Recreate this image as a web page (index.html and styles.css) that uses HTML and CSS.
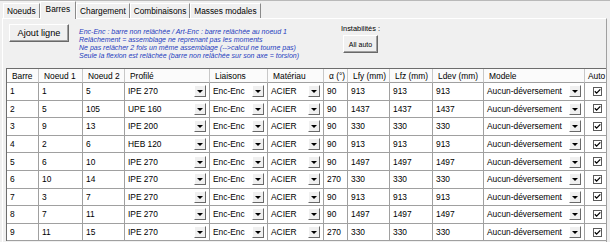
FILE: index.html
```html
<!DOCTYPE html>
<html lang="fr">
<head>
    <meta charset="UTF-8">
    <title>Barres</title>
    <link rel="stylesheet" href="styles.css">
</head>
<body>
    <div class="window">
        <div class="tabs">
            <span class="tab">Noeuds</span>
            <span class="tab active">Barres</span>
            <span class="tab">Chargement</span>
            <span class="tab">Combinaisons</span>
            <span class="tab">Masses modales</span>
        </div>

        <div class="page">
            <div class="toolbar">
                <button class="btn btn-add">Ajout ligne</button>
                <div class="notes">
                    <p>Enc-Enc : barre non relâchée / Art-Enc : barre relâchée au noeud 1</p>
                    <p>Relâchement = assemblage ne reprenant pas les moments</p>
                    <p>Ne pas relâcher 2 fois un même assemblage (--&gt;calcul ne tourne pas)</p>
                    <p>Seule la flexion est relâchée (barre non relâchée sur son axe = torsion)</p>
                </div>
                <div class="instab">
                    <span>Instabilités :</span>
                    <button class="btn btn-small">All auto</button>
                </div>
            </div>

            <div class="grid-wrap">
                <div class="grid" id="grid">
                    <div class="hd">Barre</div>
                    <div class="hd">Noeud 1</div>
                    <div class="hd">Noeud 2</div>
                    <div class="hd">Profilé</div>
                    <div class="hd">Liaisons</div>
                    <div class="hd">Matériau</div>
                    <div class="hd">α (°)</div>
                    <div class="hd">Lfy (mm)</div>
                    <div class="hd">Lfz (mm)</div>
                    <div class="hd">Ldev (mm)</div>
                    <div class="hd">Modele</div>
                    <div class="hd hd-last">Auto</div>
                </div>
            </div>
        </div>
    </div>

    <script>
        // lignes du tableau des barres
        const barres = [
            [1, 1, 5, "IPE 270", 90, 913],
            [2, 5, 105, "UPE 160", 90, 1437],
            [3, 9, 13, "IPE 200", 90, 330],
            [4, 2, 6, "HEB 120", 90, 913],
            [5, 6, 10, "IPE 270", 90, 1497],
            [6, 10, 14, "IPE 270", 270, 330],
            [7, 3, 7, "IPE 270", 90, 913],
            [8, 7, 11, "IPE 270", 90, 1497],
            [9, 11, 15, "IPE 270", 270, 330]
        ];

        const combo = (txt) => `<div class="cell combo"><span>${txt}</span><span class="drop"></span></div>`;
        const cell = (txt) => `<div class="cell">${txt}</div>`;
        const check = `<div class="cell center"><span class="check"><svg width="7" height="7" viewBox="0 0 7 7"><path d="M0.8 3.3 L2.6 5.1 L6.3 1.4" fill="none" stroke="#000" stroke-width="1.3"/></svg></span></div>`;

        let html = "";
        barres.forEach(b => {
            html += cell(b[0]) + cell(b[1]) + cell(b[2]);
            html += combo(b[3]) + combo("Enc-Enc") + combo("ACIER");
            html += cell(b[4]) + cell(b[5]) + cell(b[5]) + cell(b[5]);
            html += combo("Aucun-déversement") + check;
        });
        document.getElementById("grid").insertAdjacentHTML("beforeend", html);
    </script>
</body>
</html>
```

FILE: styles.css
```css
/* Styles généraux */
* {
    margin: 0;
    padding: 0;
    box-sizing: border-box;
}

body {
    background-color: #f0f0f0;
    font-family: "Liberation Sans", Arial, sans-serif;
    color: #000;
    width: 610px;
    height: 242px;
    overflow: hidden;
}

.window {
    border-top: 1px solid #b9b9b9;
}

/* Onglets */
.tabs {
    display: flex;
    align-items: flex-end;
    height: 17px;
    padding-left: 3px;
}

.tab {
    height: 15px;
    padding: 0 3px;
    font-size: 8.3px;
    line-height: 14px;
    border-top: 1px solid #fff;
    border-left: 1px solid #fff;
    border-right: 1px solid #8a8a8a;
    color: #000;
}

.tab.active {
    position: relative;
    z-index: 1;
    height: 18px;
    margin-bottom: -1px;
    padding: 0 5px;
    line-height: 15px;
    background-color: #f0f0f0;
}

/* Page de l'onglet */
.page {
    margin-left: 2px;
    width: 605px;
    height: 224px;
    border-top: 1px solid #fff;
    border-left: 1px solid #fff;
    border-right: 1px solid #a0a0a0;
    overflow: hidden;
}

.toolbar {
    display: flex;
    align-items: flex-start;
    height: 49px;
}

/* Boutons */
.btn {
    font-family: "Liberation Sans", Arial, sans-serif;
    background-color: #f0f0f0;
    color: #000;
    border: 1px solid;
    border-color: #fff #696969 #696969 #fff;
    box-shadow: inset -1px -1px 0 #a0a0a0;
}

.btn-add {
    margin: 5px 0 0 6px;
    width: 60px;
    height: 18px;
    font-size: 9.2px;
}

.btn-small {
    margin: 2px 0 0 2px;
    width: 35px;
    height: 18px;
    font-size: 7px;
}

/* Notes */
.notes {
    margin: 9px 0 0 10px;
    width: 262px;
    font-size: 7px;
    font-style: italic;
    line-height: 8px;
    color: #1f3cbe;
    white-space: nowrap;
}

.instab {
    display: flex;
    flex-direction: column;
    align-items: flex-start;
    margin-top: 6px;
    font-size: 7.4px;
    line-height: 8px;
}

/* Tableau */
.grid-wrap {
    margin-left: 3px;
    width: 600px;
    overflow: hidden;
}

.grid {
    display: grid;
    grid-template-columns: 32px 44px 42px 85px 58px 56px 24px 42px 43px 51px 101px 30px;
    grid-template-rows: 14px;
    grid-auto-rows: 17.6px;
    width: max-content;
    border-top: 1px solid #6d6d6d;
    border-left: 1px solid #6d6d6d;
    font-size: 8.4px;
}

.hd {
    display: flex;
    align-items: center;
    padding-left: 5px;
    background-color: #fbfbfb;
    border-right: 1px solid #c8c8c8;
    border-bottom: 1px solid #a0a0a0;
    white-space: nowrap;
}

.hd-last {
    padding-left: 3px;
}

.cell {
    display: flex;
    align-items: center;
    padding-left: 3px;
    background-color: #fff;
    border-right: 1px solid #a0a0a0;
    border-bottom: 1px solid #a0a0a0;
    white-space: nowrap;
    overflow: hidden;
}

.cell.center {
    padding-left: 8px;
}

/* Liste déroulante */
.combo {
    justify-content: space-between;
}

.drop {
    display: flex;
    align-items: center;
    justify-content: center;
    flex-shrink: 0;
    width: 12px;
    height: 12px;
    margin-right: 3px;
    background-color: #f0f0f0;
    border: 1px solid;
    border-color: #fff #696969 #696969 #fff;
}

.drop::after {
    content: "";
    border-top: 3px solid #000;
    border-left: 3px solid transparent;
    border-right: 3px solid transparent;
    margin-top: 1px;
}

/* Case à cocher */
.check {
    display: flex;
    align-items: center;
    justify-content: center;
    width: 9px;
    height: 9px;
    border: 1px solid #5a5a5a;
    background-color: #fff;
}
```
